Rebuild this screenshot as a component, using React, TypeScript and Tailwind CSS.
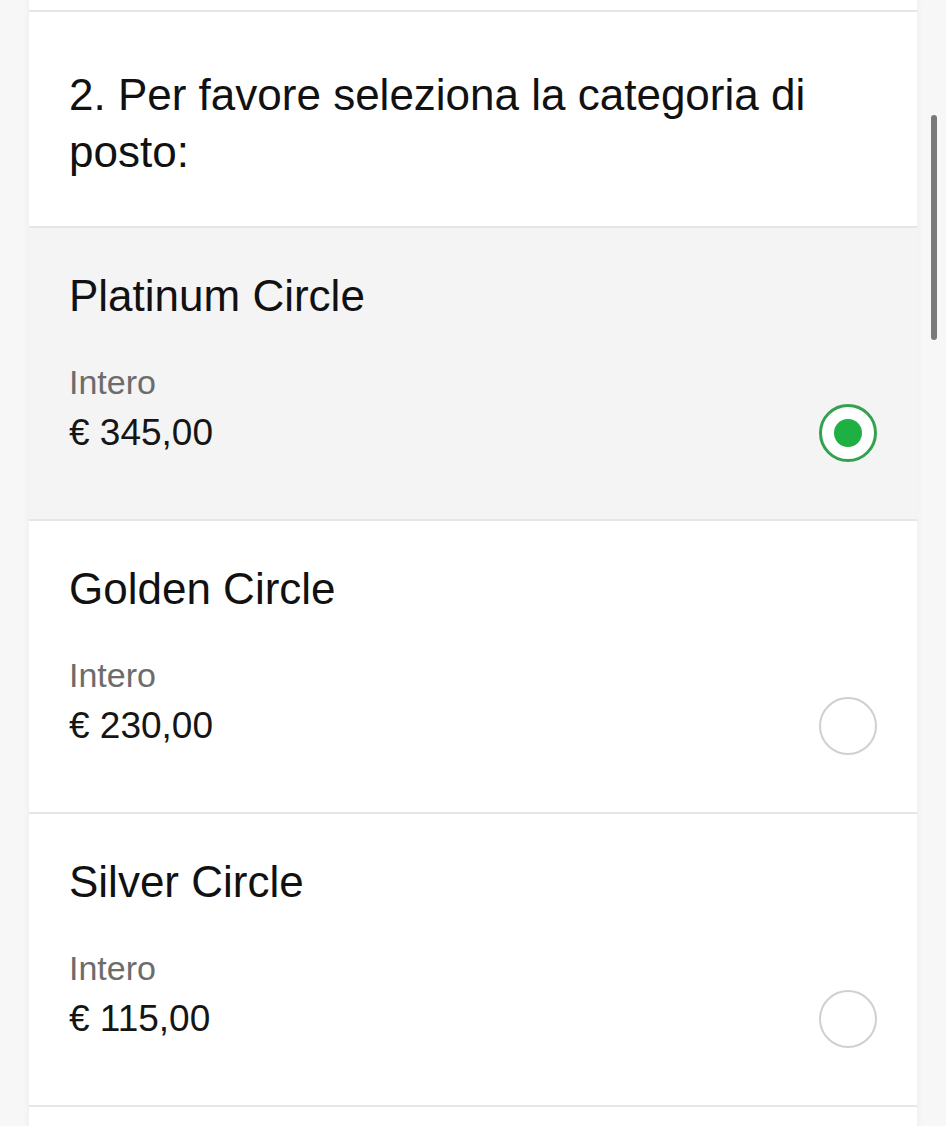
import React from "react";

type Category = {
  name: string;
  label: string;
  price: string;
  selected?: boolean;
};

const categories: Category[] = [
  { name: "Platinum Circle", label: "Intero", price: "€ 345,00", selected: true },
  { name: "Golden Circle", label: "Intero", price: "€ 230,00" },
  { name: "Silver Circle", label: "Intero", price: "€ 115,00" },
];

function Radio({ checked }: { checked?: boolean }) {
  if (checked) {
    return (
      <div className="w-[58px] h-[58px] rounded-full border-[3px] border-[#33a24f] bg-white flex items-center justify-center shrink-0">
        <div className="w-[28px] h-[28px] rounded-full bg-[#1fb043]" />
      </div>
    );
  }
  return <div className="w-[58px] h-[58px] rounded-full border-2 border-[#d0d0d0] bg-white shrink-0" />;
}

function CategoryRow({ cat }: { cat: Category }) {
  return (
    <div
      className={`h-[293px] border-b-2 border-[#e6e6e6] pl-10 pr-10 pt-[42px] ${
        cat.selected ? "bg-[#f4f4f4]" : "bg-white"
      }`}
    >
      <div className="text-[44px] leading-[52px] text-[#111111]">{cat.name}</div>
      <div className="mt-10 text-[34px] leading-[40px] text-[#6c6c6c]">{cat.label}</div>
      <div className="mt-[2px] flex items-center justify-between">
        <div className="text-[37px] leading-[40px] text-[#151515]">{cat.price}</div>
        <Radio checked={cat.selected} />
      </div>
    </div>
  );
}

export default function App() {
  return (
    <div className="relative min-h-screen h-[1126px] overflow-hidden bg-[#f7f7f8] font-['Liberation_Sans',Arial,sans-serif]">
      <div className="mx-[29px] bg-white shadow-[0_0_8px_rgba(0,0,0,0.05)]">
        <div className="h-[12px] border-b-2 border-[#e6e6e6]" />
        <div className="h-[216px] border-b-2 border-[#e6e6e6] px-10 pt-[54px]">
          <h2 className="text-[44px] leading-[57px] text-[#111111]">
            2. Per favore seleziona la categoria di posto:
          </h2>
        </div>
        {categories.map((c) => (
          <CategoryRow key={c.name} cat={c} />
        ))}
        <div className="h-[60px] bg-white" />
      </div>

      {/* scrollbar */}
      <div className="absolute left-[931px] top-[115px] w-[6px] h-[225px] rounded-full bg-[#7a7a7a]" />
    </div>
  );
}
